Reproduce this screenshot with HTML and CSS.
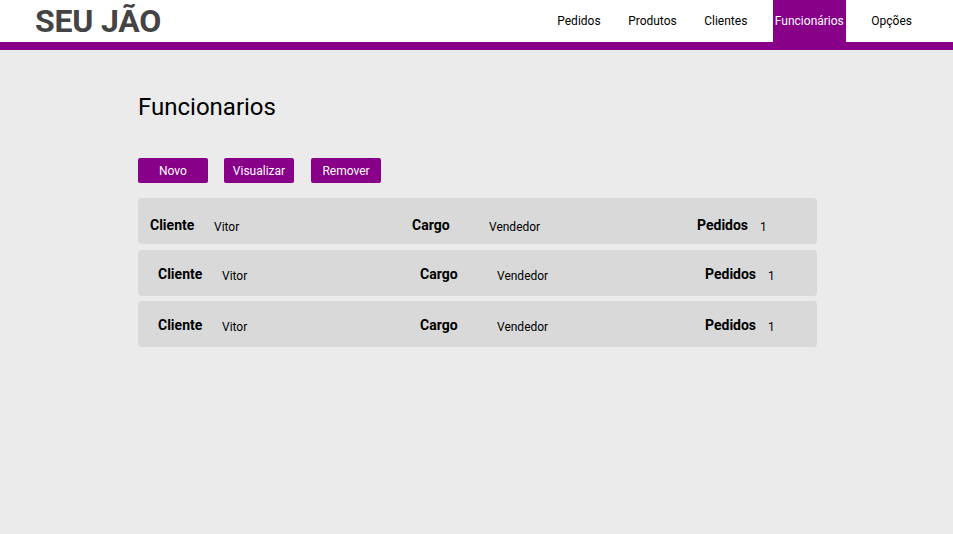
FILE: index.html
```html
<!DOCTYPE html>
<html lang="pt">
<head>
<meta charset="utf-8">
<title>Seu Jão</title>
<link rel="stylesheet" href="styles.css">
</head>
<body>
<header class="topbar">
  <div class="logo">SEU JÃO</div>
  <nav class="nav">
    <a class="nav-item">Pedidos</a>
    <a class="nav-item">Produtos</a>
    <a class="nav-item">Clientes</a>
    <a class="nav-item active">Funcionários</a>
    <a class="nav-item">Opções</a>
  </nav>
</header>
<div class="stripe"></div>
<main class="content">
  <h1 class="title">Funcionarios</h1>
  <div class="actions">
    <button class="btn">Novo</button>
    <button class="btn">Visualizar</button>
    <button class="btn">Remover</button>
  </div>
  <div class="list">
    <div class="row first">
      <span class="label l1">Cliente</span><span class="value v1">Vitor</span>
      <span class="label l2">Cargo</span><span class="value v2">Vendedor</span>
      <span class="label l3">Pedidos</span><span class="value">1</span>
    </div>
    <div class="row">
      <span class="label l1">Cliente</span><span class="value v1">Vitor</span>
      <span class="label l2">Cargo</span><span class="value v2">Vendedor</span>
      <span class="label l3">Pedidos</span><span class="value">1</span>
    </div>
    <div class="row">
      <span class="label l1">Cliente</span><span class="value v1">Vitor</span>
      <span class="label l2">Cargo</span><span class="value v2">Vendedor</span>
      <span class="label l3">Pedidos</span><span class="value">1</span>
    </div>
  </div>
</main>
</body>
</html>
```
FILE: styles.css
```css
* { box-sizing: border-box; }
html, body { margin: 0; padding: 0; }
body {
  background: #ebebeb;
  font-family: Roboto, "Liberation Sans", sans-serif;
  color: #000;
  min-height: 534px;
}
.topbar {
  background: #fff;
  height: 42px;
  display: flex;
  align-items: stretch;
  justify-content: space-between;
  padding: 0 39px 0 35px;
}
.logo {
  font-weight: 700;
  font-size: 32px;
  color: #444;
  line-height: 42px;
  letter-spacing: -0.2px;
}
.nav {
  display: flex;
  gap: 23.5px;
  align-items: stretch;
}
.nav-item {
  font-size: 12px;
  line-height: 41px;
  padding: 1px 2px 0;
  color: #000;
}
.nav-item.active {
  background: #880088;
  color: #fff;
}
.stripe {
  height: 8px;
  background: #880088;
}
.content {
  width: 679px;
  margin: 0 0 0 138px;
}
.title {
  font-weight: 400;
  font-size: 24px;
  margin: 0;
  padding-top: 43px;
  line-height: 28px;
}
.actions {
  display: flex;
  gap: 16px;
  margin-top: 37px;
}
.btn {
  width: 70px;
  height: 25px;
  border: none;
  border-radius: 2px;
  background: #880088;
  color: #fff;
  font-family: Roboto, "Liberation Sans", sans-serif;
  font-size: 12px;
  padding: 0;
}
.btn:nth-child(3) { margin-left: 1px; }
.list {
  margin-top: 15px;
  display: flex;
  flex-direction: column;
  gap: 5.5px;
}
.row {
  background: #d9d9d9;
  border-radius: 4px;
  height: 46px;
  display: flex;
  align-items: baseline;
  padding: 16px 0 0 20px;
}
.row.first { padding-left: 12px; padding-top: 19px; }
.label {
  font-weight: 700;
  font-size: 14px;
}
.value {
  font-size: 12px;
  position: relative;
  top: 1px;
}
.l1 { width: 64px; }
.v1 { width: 198px; }
.l2 { width: 77px; }
.v2 { width: 208px; }
.l3 { width: 63px; }
```
